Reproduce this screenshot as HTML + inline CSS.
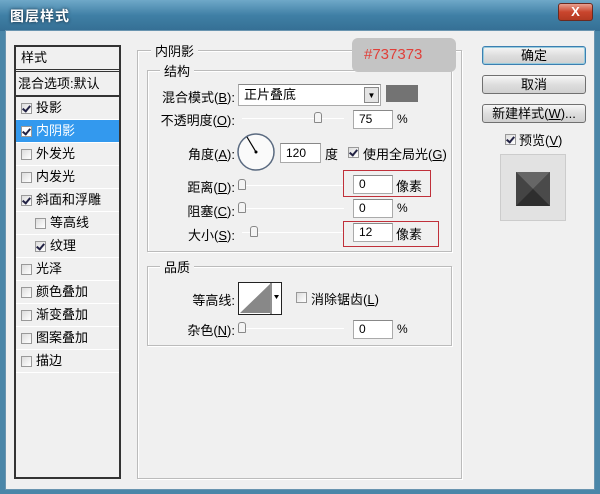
<!DOCTYPE html>
<html><head><meta charset="utf-8"><style>
*{margin:0;padding:0;box-sizing:border-box}
body{width:600px;height:494px;overflow:hidden;background:#4a86a8;font-family:"Liberation Sans","Noto Sans CJK SC",sans-serif;font-size:12px;color:#000;position:relative}
.a{position:absolute}
.win{left:5px;top:30px;width:590px;height:460px;background:#f0f0f0;border:1px solid #6a95b0}
.title{left:0;top:0;width:600px;height:31px;background:linear-gradient(#6fa8c8,#3f7fa5 50%,#356f94);}
.tt{left:10px;top:6px;color:#fff;font-weight:bold;font-size:14px;letter-spacing:1px;text-shadow:0 0 3px #123}
.close{left:558px;top:3px;width:35px;height:18px;border-radius:3px;background:linear-gradient(#e8a090,#c9452d 50%,#b33a22);border:1px solid #6a2a20;color:#fff;text-align:center;font-weight:bold;font-size:13px;line-height:16px}
.lp{left:14px;top:45px;width:107px;height:434px;border:2px solid #333;background:#f0f0f0}
.it{position:absolute;left:0;width:103px;height:23px;border-bottom:1px solid #fff;line-height:22px;font-size:13px;padding-left:20px}
.cb{position:absolute;width:11px;height:11px;border:1px solid #999;background:linear-gradient(135deg,#ddd,#fff)}
.cb.on::after{content:"";position:absolute;left:2px;top:0px;width:3px;height:6px;border:solid #224;border-width:0 2px 2px 0;transform:rotate(40deg)}
.grp{border:1px solid #bbb;box-shadow:1px 1px 0 #fff inset,1px 1px 0 #fff}
.lg{background:#f0f0f0;padding:0 4px;font-size:13px}
.lbl{font-size:13px;text-align:right}
.inp{background:#fff;border:1px solid #aaa;border-top-color:#888;font-size:12px;padding-left:5px;line-height:17px}
.sl{height:1px;background:#aaa;border-bottom:1px solid #fff}
.th{width:8px;height:11px;border:1px solid #888;border-radius:3px 3px 1px 1px;background:#f4f4f4}
.btn{left:482px;width:104px;height:19px;border:1px solid #707070;border-radius:3px;background:linear-gradient(#f6f6f6,#dedede 50%,#d0d0d0);text-align:center;font-size:13px;line-height:17px}
.red{border:1px solid #c0303a}
</style></head><body>
<div class="a title"></div>
<div class="a tt">图层样式</div>
<div class="a close">X</div>
<div class="a win"></div>

<div class="a lp">
 <div class="it" style="top:0;height:25px;border-bottom:3px double #333;padding-left:5px">样式</div>
 <div class="it" style="top:26px;border-bottom:2px solid #333;padding-left:2px;height:24px">混合选项:默认</div>
 <div class="it" style="top:50px"><span class="cb on" style="left:5px;top:6px"></span>投影</div>
 <div class="it" style="top:73px;background:#3399ee;color:#fff"><span class="cb on" style="left:5px;top:6px;background:#fff"></span>内阴影</div>
 <div class="it" style="top:96px"><span class="cb" style="left:5px;top:6px"></span>外发光</div>
 <div class="it" style="top:119px"><span class="cb" style="left:5px;top:6px"></span>内发光</div>
 <div class="it" style="top:142px"><span class="cb on" style="left:5px;top:6px"></span>斜面和浮雕</div>
 <div class="it" style="top:165px;padding-left:34px"><span class="cb" style="left:19px;top:6px"></span>等高线</div>
 <div class="it" style="top:188px;padding-left:34px"><span class="cb on" style="left:19px;top:6px"></span>纹理</div>
 <div class="it" style="top:211px"><span class="cb" style="left:5px;top:6px"></span>光泽</div>
 <div class="it" style="top:234px"><span class="cb" style="left:5px;top:6px"></span>颜色叠加</div>
 <div class="it" style="top:257px"><span class="cb" style="left:5px;top:6px"></span>渐变叠加</div>
 <div class="it" style="top:280px"><span class="cb" style="left:5px;top:6px"></span>图案叠加</div>
 <div class="it" style="top:303px"><span class="cb" style="left:5px;top:6px"></span>描边</div>
</div>

<div class="a grp" style="left:137px;top:50px;width:325px;height:429px"></div>
<div class="a lg" style="left:151px;top:41px">内阴影</div>
<div class="a grp" style="left:147px;top:70px;width:305px;height:182px"></div>
<div class="a lg" style="left:160px;top:61px">结构</div>
<div class="a grp" style="left:147px;top:266px;width:305px;height:80px"></div>
<div class="a lg" style="left:160px;top:257px">品质</div>

<div class="a" style="left:352px;top:38px;width:104px;height:34px;background:#c4c4c4;border-radius:6px;color:#e0403a;font-size:15px;line-height:34px;padding-left:12px">#737373</div>

<div class="a lbl" style="left:150px;top:87px;width:85px">混合模式(<u>B</u>):</div>
<div class="a inp" style="left:238px;top:84px;width:143px;height:22px;line-height:20px;font-size:13px">正片叠底</div>
<div class="a" style="left:364px;top:87px;width:15px;height:16px;border:1px solid #888;background:#e4e4e4;font-size:8px;text-align:center;line-height:15px">▼</div>
<div class="a" style="left:386px;top:85px;width:32px;height:17px;background:#737373"></div>

<div class="a lbl" style="left:150px;top:110px;width:85px">不透明度(<u>O</u>):</div>
<div class="a sl" style="left:242px;top:118px;width:102px"></div>
<div class="a th" style="left:314px;top:112px"></div>
<div class="a inp" style="left:353px;top:110px;width:40px;height:19px">75</div>
<div class="a" style="left:397px;top:112px">%</div>

<div class="a lbl" style="left:150px;top:144px;width:85px">角度(<u>A</u>):</div>
<svg class="a" style="left:236px;top:132px" width="40" height="40"><circle cx="20" cy="20" r="18" fill="#fafafa" stroke="#5a6a80" stroke-width="1.5"/><line x1="20" y1="20" x2="11" y2="5" stroke="#000" stroke-width="1.2"/><circle cx="20" cy="20" r="1.5" fill="#000"/></svg>
<div class="a inp" style="left:280px;top:143px;width:41px;height:20px;line-height:18px">120</div>
<div class="a" style="left:325px;top:144px;font-size:13px">度</div>
<span class="cb on a" style="left:348px;top:147px"></span>
<div class="a" style="left:363px;top:144px;font-size:13px">使用全局光(<u>G</u>)</div>

<div class="a lbl" style="left:150px;top:177px;width:85px">距离(<u>D</u>):</div>
<div class="a sl" style="left:242px;top:185px;width:102px"></div>
<div class="a th" style="left:238px;top:179px"></div>
<div class="a red" style="left:343px;top:170px;width:88px;height:27px"></div>
<div class="a inp" style="left:353px;top:175px;width:40px;height:19px">0</div>
<div class="a" style="left:396px;top:176px;font-size:13px">像素</div>

<div class="a lbl" style="left:150px;top:201px;width:85px">阻塞(<u>C</u>):</div>
<div class="a sl" style="left:242px;top:208px;width:102px"></div>
<div class="a th" style="left:238px;top:202px"></div>
<div class="a inp" style="left:353px;top:199px;width:40px;height:19px">0</div>
<div class="a" style="left:397px;top:201px">%</div>

<div class="a lbl" style="left:150px;top:225px;width:85px">大小(<u>S</u>):</div>
<div class="a sl" style="left:242px;top:232px;width:102px"></div>
<div class="a th" style="left:250px;top:226px"></div>
<div class="a red" style="left:343px;top:221px;width:96px;height:26px"></div>
<div class="a inp" style="left:353px;top:223px;width:40px;height:19px">12</div>
<div class="a" style="left:396px;top:224px;font-size:13px">像素</div>

<div class="a lbl" style="left:150px;top:290px;width:85px">等高线:</div>
<svg class="a" style="left:238px;top:282px" width="44" height="33"><rect x="0.5" y="0.5" width="43" height="32" fill="#fff" stroke="#222"/><polygon points="2,31 32,2 32,31" fill="#888"/><line x1="33" y1="1" x2="33" y2="32" stroke="#222"/><polygon points="36,13 41,13 38.5,17" fill="#000"/></svg>
<span class="cb a" style="left:296px;top:292px"></span>
<div class="a" style="left:311px;top:289px;font-size:13px">消除锯齿(<u>L</u>)</div>

<div class="a lbl" style="left:150px;top:320px;width:85px">杂色(<u>N</u>):</div>
<div class="a sl" style="left:242px;top:328px;width:102px"></div>
<div class="a th" style="left:238px;top:322px"></div>
<div class="a inp" style="left:353px;top:320px;width:40px;height:19px">0</div>
<div class="a" style="left:397px;top:322px">%</div>

<div class="a btn" style="top:46px;border-color:#3c7fb1;box-shadow:0 0 0 1px #9cd inset">确定</div>
<div class="a btn" style="top:75px">取消</div>
<div class="a btn" style="top:104px">新建样式(<u>W</u>)...</div>
<span class="cb on a" style="left:505px;top:134px"></span>
<div class="a" style="left:519px;top:130px;font-size:13px">预览(<u>V</u>)</div>
<div class="a" style="left:500px;top:154px;width:66px;height:67px;background:#e2e2e2;border:1px solid #ccc"></div>
<svg class="a" style="left:516px;top:172px" width="36" height="36"><rect x="0" y="0" width="34" height="34" fill="#3a3a3a"/><polygon points="0,0 34,0 17,17" fill="#666"/><polygon points="0,0 17,17 0,34" fill="#444"/><polygon points="34,0 17,17 34,34" fill="#4a4a4a"/><polygon points="0,34 17,17 34,34" fill="#2e2e2e"/></svg>
</body></html>
